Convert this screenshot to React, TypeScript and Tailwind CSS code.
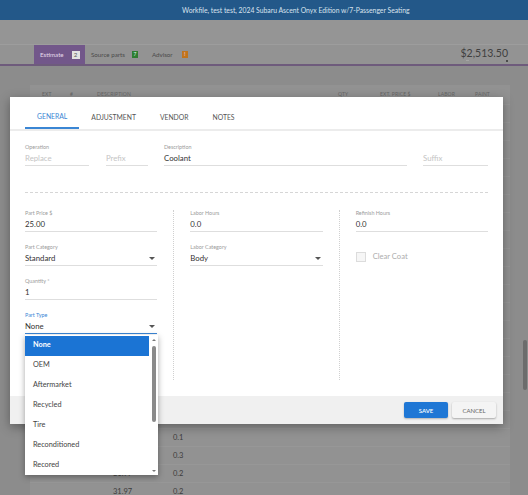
import React from 'react';

const Caret = () => (
  <span className="w-0 h-0 border-l-[3px] border-r-[3px] border-t-[3px] border-l-transparent border-r-transparent border-t-[#555]" />
);

interface FieldProps {
  label: string;
  value: string;
  muted?: boolean;
  select?: boolean;
  active?: boolean;
  className?: string;
}

const Field = ({ label, value, muted, select, active, className = '' }: FieldProps) => (
  <div className={`flex flex-col ${className}`}>
    <div className={`h-[10px] text-[5.4px] leading-[10px] ${active ? 'text-[#3b86d6]' : 'text-[#9b9b9b]'}`}>{label}</div>
    <div
      className={`h-[14px] flex items-center justify-between border-b text-[7.8px] ${
        active ? 'border-[#3b86d6]' : 'border-[#dedede]'
      } ${muted ? 'text-[#c4c4c4]' : 'text-[#333]'}`}
    >
      <span>{value}</span>
      {select && <span className="pr-[2px] flex items-center"><Caret /></span>}
    </div>
  </div>
);

const rowValues: Record<number, [string, string]> = {
  18: ['', '0.1'],
  19: ['', '0.3'],
  20: ['31.97', '0.2'],
  21: ['31.97', '0.2'],
};

const options = ['None', 'OEM', 'Aftermarket', 'Recycled', 'Tire', 'Reconditioned', 'Recored'];

export default function App() {
  return (
    <div className="relative w-[528px] h-[495px] overflow-hidden bg-[#8c8c8c] font-['Lato',sans-serif]">
      {/* header */}
      <div className="h-[20px] bg-[#235889] flex items-center pl-[182px] text-[6.8px] text-[#d9e3ee]">
        Workfile, test test, 2024 Subaru Ascent Onyx Edition w/7-Passenger Seating
      </div>
      <div className="h-[24px] bg-[#959595]" />
      <div className="h-[22px] bg-[#939393] border-t border-[#9d9d9d] border-b-2 border-b-[#6e5b7c] flex items-stretch pl-[34px] text-[6.2px] text-[#4a4a4a]">
        <div className="w-[51px] bg-[#72578a] flex items-center pl-[6px] gap-[8px] text-[#e6dcec]">
          <span>Estimate</span>
          <span className="w-[8px] h-[8px] bg-[#e2e2e2] text-[#555] flex items-center justify-center">2</span>
        </div>
        <div className="flex items-center pl-[6px] gap-[7px]">
          <span>Source parts</span>
          <span className="w-[6px] h-[7px] bg-[#2f7d32] text-[#dfe] flex items-center justify-center text-[5px]">7</span>
        </div>
        <div className="flex items-center pl-[14px] gap-[9px]">
          <span>Advisor</span>
          <span className="w-[6px] h-[7px] bg-[#c0741c] text-[#fde] flex items-center justify-center text-[5px]">!</span>
        </div>
        <div className="ml-auto mr-[20px] flex flex-col items-end justify-center">
          <span className="text-[10.5px] leading-[12px] text-[#404040]">$2,513.50</span>
          <span className="w-[42px] h-[3px] flex justify-between items-center">
            <span className="w-[3px] h-[1px] bg-[#a5a5a5]" />
            <span className="w-[2px] h-[2px] rounded-full bg-[#333]" />
          </span>
        </div>
      </div>

      {/* card behind */}
      <div className="flex mt-[19px]">
        <div className="ml-[30px] w-[480px] bg-[#929292] flex flex-col">
          <div className="h-[19px] flex items-center text-[5px] text-[#666] tracking-wide">
            <span className="ml-[12px] w-[28px]">EXT</span>
            <span className="w-[27px]">#</span>
            <span className="w-[241px]">DESCRIPTION</span>
            <span className="w-[42px]">QTY</span>
            <span className="w-[58px]">EXT. PRICE $</span>
            <span className="w-[37px]">LABOR</span>
            <span>PAINT</span>
          </div>
          {Array.from({ length: 22 }).map((_, i) => (
            <div key={i} className="h-[18px] border-t border-[#979797] flex items-center text-[7.5px] text-[#3c3c3c]">
              <span className="ml-[83px] w-[60px]">{rowValues[i]?.[0]}</span>
              <span>{rowValues[i]?.[1]}</span>
            </div>
          ))}
        </div>
        <div className="ml-[13px] mt-[255px] w-[4px] h-[50px] bg-[#6c6c6c] rounded-[2px]" />
      </div>

      {/* modal */}
      <div className="absolute left-[10px] top-[97px] w-[493px] h-[327px] bg-white shadow-[0_3px_10px_rgba(0,0,0,0.35)] flex flex-col">
        <div className="h-[34px] pt-[8px] pl-[15px] border-b-2 border-[#ececec] flex text-[6.8px] text-[#555]">
          <div className="h-[24px] px-[12px] flex items-center border-b-2 border-[#3a86d4] text-[#3a86d4]">GENERAL</div>
          <div className="h-[24px] px-[12px] flex items-center">ADJUSTMENT</div>
          <div className="h-[24px] px-[12px] flex items-center">VENDOR</div>
          <div className="h-[24px] px-[12px] flex items-center">NOTES</div>
        </div>
        <div className="flex-1 px-[15px] pt-[11px]">
          <div className="flex">
            <Field label="Operation" value="Replace" muted className="w-[64px]" />
            <Field label="" value="Prefix" muted className="w-[42px] ml-[17px]" />
            <Field label="Description" value="Coolant" className="w-[243px] ml-[16px]" />
            <Field label="" value="Suffix" muted className="w-[65px] ml-[16px]" />
          </div>
          <div className="mt-[26px] border-t border-dashed border-[#d6d6d6]" />
          <div className="mt-[15px] flex">
            <div className="w-[133px] flex flex-col gap-[10px]">
              <Field label="Part Price $" value="25.00" />
              <Field label="Part Category" value="Standard" select />
              <Field label="Quantity *" value="1" />
              <Field label="Part Type" value="None" select active />
            </div>
            <div className="mx-[16px] mt-[2px] h-[170px] border-l border-dotted border-[#d0d0d0]" />
            <div className="w-[133px] flex flex-col gap-[10px]">
              <Field label="Labor Hours" value="0.0" />
              <Field label="Labor Category" value="Body" select />
            </div>
            <div className="mx-[16px] mt-[2px] h-[170px] border-l border-dotted border-[#d0d0d0]" />
            <div className="w-[133px] flex flex-col gap-[10px]">
              <Field label="Refinish Hours" value="0.0" />
              <div className="h-[24px] flex items-center gap-[7px] pt-[6px]">
                <span className="w-[10px] h-[10px] border border-[#dcdcdc] bg-[#f6f6f6]" />
                <span className="text-[7.6px] text-[#adadad]">Clear Coat</span>
              </div>
            </div>
          </div>
        </div>
        <div className="h-[28px] bg-[#f0f0f0] flex items-center justify-end gap-[4px] pr-[7px]">
          <button className="w-[44px] h-[16px] bg-[#1f77d5] rounded-[2px] text-white text-[6px] font-semibold shadow-[0_1px_2px_rgba(0,0,0,0.25)]">SAVE</button>
          <button className="w-[44px] h-[16px] bg-[#f4f4f4] rounded-[2px] text-[#666] text-[6px] shadow-[0_1px_2px_rgba(0,0,0,0.3)]">CANCEL</button>
        </div>
      </div>

      {/* dropdown */}
      <div className="absolute left-[25px] top-[335px] w-[133px] h-[140px] bg-white shadow-[0_2px_6px_rgba(0,0,0,0.35)] flex pt-[1px]">
        <div className="flex-1 flex flex-col">
          {options.map((o, i) => (
            <div
              key={o}
              className={`h-[20px] pl-[8px] flex items-center text-[7.3px] ${
                i === 0 ? 'bg-[#1b74d4] text-white font-bold' : 'text-[#444]'
              }`}
            >
              {o}
            </div>
          ))}
        </div>
        <div className="w-[9px] flex flex-col items-center pt-[3px] pb-[3px]">
          <span className="w-0 h-0 border-l-[2px] border-r-[2px] border-b-[2px] border-l-transparent border-r-transparent border-b-[#777]" />
          <span className="mt-[5px] w-[4px] h-[76px] rounded-[2px] bg-[#8a8a8a]" />
          <span className="mt-auto w-0 h-0 border-l-[2px] border-r-[2px] border-t-[2px] border-l-transparent border-r-transparent border-t-[#777]" />
        </div>
      </div>
    </div>
  );
}
